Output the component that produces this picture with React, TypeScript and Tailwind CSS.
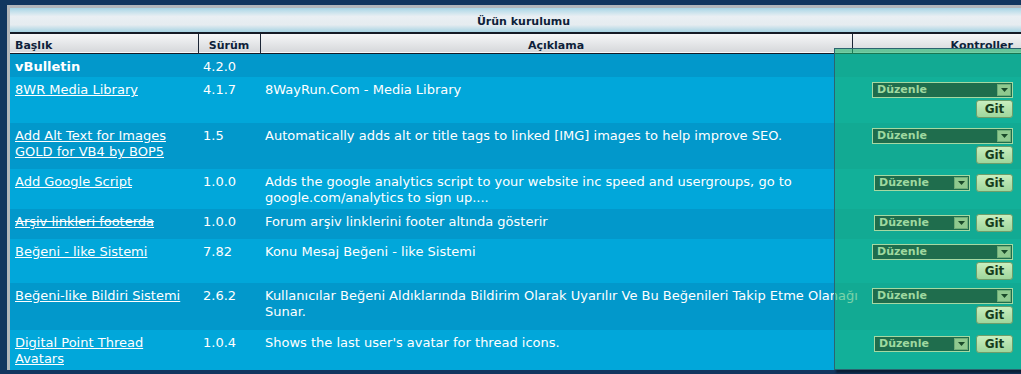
import React from 'react';

type Row = {
  title: string;
  version: string;
  desc?: string;
  h: string;
  dark: boolean;
  kind?: 'stack' | 'inline';
  strike?: boolean;
  bold?: boolean;
};

const rows: Row[] = [
  { title: 'vBulletin', version: '4.2.0', h: 'h-[24px]', dark: true, bold: true },
  {
    title: '8WR Media Library',
    version: '4.1.7',
    desc: '8WayRun.Com - Media Library',
    h: 'h-[46px]',
    dark: false,
    kind: 'stack',
  },
  {
    title: 'Add Alt Text for Images GOLD for VB4 by BOP5',
    version: '1.5',
    desc: 'Automatically adds alt or title tags to linked [IMG] images to help improve SEO.',
    h: 'h-[46px]',
    dark: true,
    kind: 'stack',
  },
  {
    title: 'Add Google Script',
    version: '1.0.0',
    desc: 'Adds the google analytics script to your website inc speed and usergroups, go to google.com/analytics to sign up....',
    h: 'h-[40px]',
    dark: false,
    kind: 'inline',
  },
  {
    title: 'Arşiv linkleri footerda',
    version: '1.0.0',
    desc: 'Forum arşiv linklerini footer altında gösterir',
    h: 'h-[30px]',
    dark: true,
    kind: 'inline',
    strike: true,
  },
  {
    title: 'Beğeni - like Sistemi',
    version: '7.82',
    desc: 'Konu Mesaj Beğeni - like Sistemi',
    h: 'h-[44px]',
    dark: false,
    kind: 'stack',
  },
  {
    title: 'Beğeni-like Bildiri Sistemi',
    version: '2.6.2',
    desc: 'Kullanıcılar Beğeni Aldıklarında Bildirim Olarak Uyarılır Ve Bu Beğenileri Takip Etme Olanağı Sunar.',
    h: 'h-[47px]',
    dark: true,
    kind: 'stack',
  },
  {
    title: 'Digital Point Thread Avatars',
    version: '1.0.4',
    desc: "Shows the last user's avatar for thread icons.",
    h: 'h-[40px]',
    dark: false,
    kind: 'inline',
  },
];

function Select({ wide }: { wide: boolean }) {
  return (
    <div
      className={`flex h-[16px] items-stretch border border-[#a6d9a2] bg-[#1f6d4d] ${wide ? 'w-[141px]' : 'w-[96px]'}`}
    >
      <span className="flex-1 pl-[4px] text-[11px] font-bold leading-[14px] text-[#9fd9a0]">
        Düzenle
      </span>
      <span className="m-[1px] flex w-[14px] items-center justify-center border border-[#6fae78] bg-[#8fc98f]">
        <svg width="7" height="4" viewBox="0 0 7 4">
          <path d="M0 0 L7 0 L3.5 4 Z" fill="#1a4a2a" />
        </svg>
      </span>
    </div>
  );
}

function GitButton() {
  return (
    <div className="flex h-[18px] w-[37px] items-center justify-center rounded-[3px] border border-[#6e9e6a] bg-gradient-to-b from-[#c9efbf] to-[#9fd69c] text-[12px] font-bold leading-none text-[#173d1c]">
      Git
    </div>
  );
}

export default function App() {
  return (
    <div
      className="h-[374px] w-[1021px] overflow-hidden bg-[#12365f] pl-[7px] pt-[5px]"
      style={{ fontFamily: '"DejaVu Sans", Verdana, sans-serif' }}
    >
      <div className="relative w-[1030px] border-l-[3px] border-t-[3px] border-[#b3b6ba] bg-white">
        <div className="flex h-[26px] items-center justify-center border-b-2 border-[#141a26] bg-[linear-gradient(#a9d6e6_0%,#e9eff3_35%,#e6ecf0_70%,#a6d3e3_100%)] pt-[4px] text-[11px] font-bold text-[#0e1f3a]">
          Ürün kurulumu
        </div>
        <table className="w-[1011px] table-fixed border-collapse text-white">
          <colgroup>
            <col className="w-[188px]" />
            <col className="w-[62px]" />
            <col className="w-[592px]" />
            <col className="w-[169px]" />
          </colgroup>
          <thead>
            <tr className="h-[19px] border-b border-[#141a26] bg-gradient-to-b from-[#f6f7f8] to-[#d6d8db] text-[11px] font-bold leading-[14px] text-[#0e1f3a]">
              <th className="pl-[5px] text-left align-bottom">Başlık</th>
              <th className="border-l border-[#1b2636] text-center align-bottom">Sürüm</th>
              <th className="border-l border-[#1b2636] text-center align-bottom">Açıklama</th>
              <th className="border-l border-[#1b2636] pr-[8px] text-right align-bottom">
                Kontroller
              </th>
            </tr>
          </thead>
          <tbody className="text-[13px] leading-[16px]">
            {rows.map((r) => (
              <tr key={r.title} className={`${r.h} ${r.dark ? 'bg-[#0298cb]' : 'bg-[#01a7da]'}`}>
                <td className="pl-[5px] pr-[4px] pt-[5px] align-top">
                  {r.bold ? (
                    <span className="font-bold">{r.title}</span>
                  ) : (
                    <span
                      className={
                        r.strike ? '[text-decoration-line:underline_line-through]' : 'underline'
                      }
                    >
                      {r.title}
                    </span>
                  )}
                </td>
                <td className="pl-[5px] pt-[5px] align-top">{r.version}</td>
                <td className="pl-[5px] pt-[5px] align-top">
                  <div className="-mr-[6px]">{r.desc}</div>
                </td>
                <td className="pr-[8px] align-top">
                  {r.kind === 'stack' && (
                    <div className="relative z-10 flex flex-col items-end gap-[2px] pt-[5px]">
                      <Select wide />
                      <GitButton />
                    </div>
                  )}
                  {r.kind === 'inline' && (
                    <div className="relative z-10 flex items-center justify-end gap-[6px] pt-[5px]">
                      <Select wide={false} />
                      <GitButton />
                    </div>
                  )}
                </td>
              </tr>
            ))}
          </tbody>
        </table>
        <div className="pointer-events-none absolute left-[824px] top-[40px] h-[322px] w-[200px] border border-[#2b6470] bg-[rgba(30,182,110,0.6)] shadow-[2px_3px_2px_rgba(0,0,0,0.45)]" />
      </div>
    </div>
  );
}
